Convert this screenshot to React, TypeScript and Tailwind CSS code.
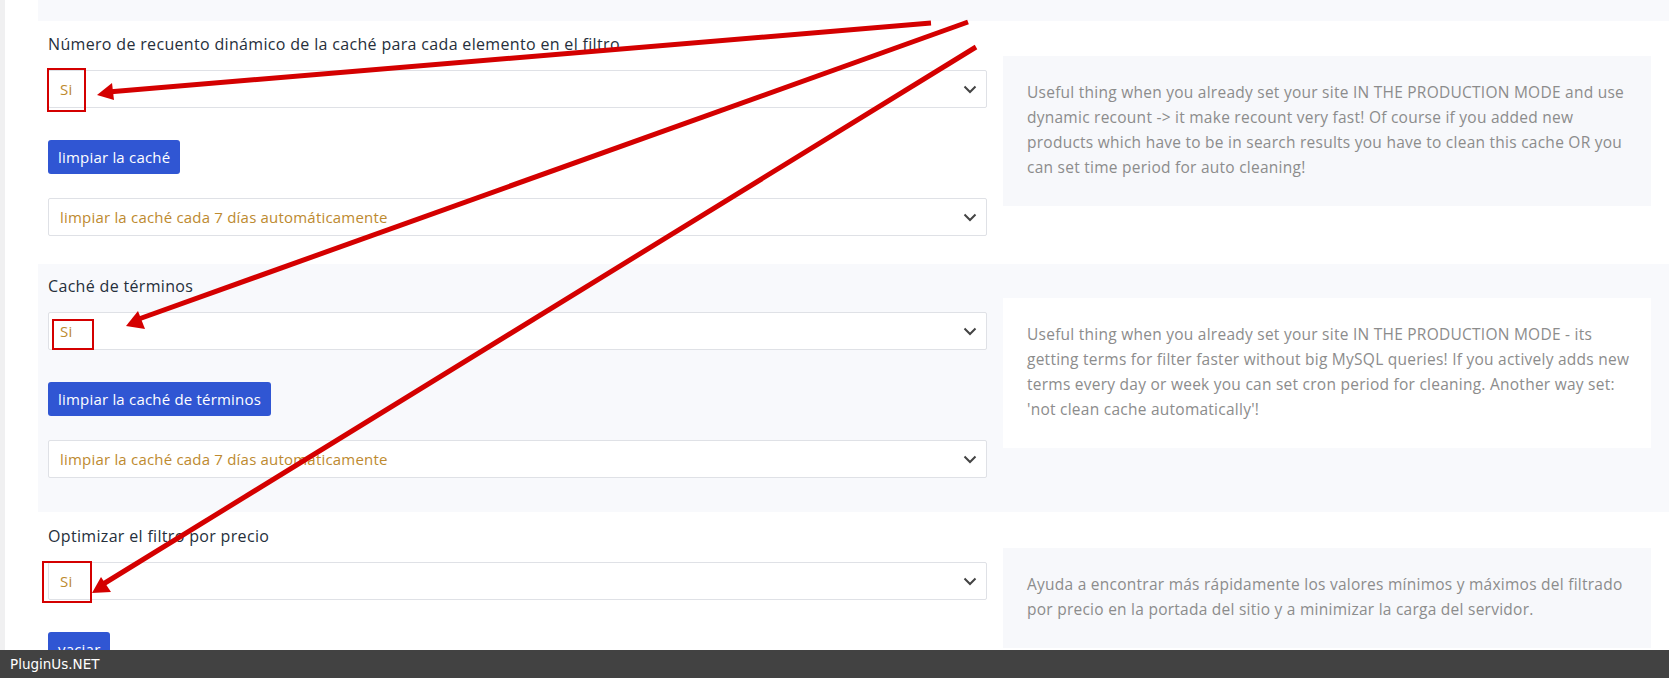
const font = { fontFamily: "'Open Sans', 'Noto Sans', sans-serif" };

const Chevron = () => (
  <svg width="14" height="9" viewBox="0 0 14 9" className="text-[#444]">
    <path d="M1.5 1.5 L7 7 L12.5 1.5" fill="none" stroke="currentColor" strokeWidth="2" />
  </svg>
);

const Select = ({ value }: { value: string }) => (
  <div className="h-[38px] w-full border border-[#dfe1e6] bg-white rounded-[2px] flex items-center justify-between pl-[11px] pr-[9px]">
    <span className="text-[15px] tracking-[0.2px] text-[#bd8a2f]">{value}</span>
    <Chevron />
  </div>
);

const Button = ({ label }: { label: string }) => (
  <button className="h-[34px] px-[10px] bg-[#3056d3] text-white text-[15px] tracking-[0.2px] rounded-[3px] self-start">
    {label}
  </button>
);

type SectionProps = {
  title: string;
  button: string;
  secondSelect?: string;
  info: string[];
  shaded?: boolean;
  className: string;
};

const Section = ({ title, button, secondSelect, info, shaded, className }: SectionProps) => (
  <div className={`flex gap-[16px] px-[10px] ${shaded ? "bg-[#f8f9fc]" : "bg-white"} ${className}`}>
    <div className="w-[939px] flex flex-col">
      <div className="text-[16px] tracking-[0.33px] leading-[24px] text-[#262f3b] mb-[14px]">{title}</div>
      <Select value="Si" />
      <div className="mt-[32px] flex">
        <Button label={button} />
      </div>
      {secondSelect && (
        <div className="mt-[24px]">
          <Select value={secondSelect} />
        </div>
      )}
    </div>
    <div
      className={`w-[648px] self-start mt-[24px] pl-[24px] pr-[20px] pt-[24px] pb-[26px] text-[15.5px] tracking-[0.25px] leading-[25px] text-[#8c8c8c] ${
        shaded ? "bg-white" : "bg-[#f7f8fb]"
      }`}
    >
      {info.map((line, i) => (
        <div key={i} className="whitespace-nowrap">
          {line}
        </div>
      ))}
    </div>
  </div>
);

export default function App() {
  return (
    <div className="relative flex h-[678px] w-[1669px] overflow-hidden bg-white" style={font}>
      <div className="w-[5px] bg-[#f0f0f1] shrink-0" />
      <div className="flex-1 pl-[33px]">
        {/* tail of previous block */}
        <div className="h-[21px] bg-[#f8f9fc]" />

        <Section
          title="Número de recuento dinámico de la caché para cada elemento en el filtro"
          button="limpiar la caché"
          secondSelect="limpiar la caché cada 7 días automáticamente"
          info={[
            "Useful thing when you already set your site IN THE PRODUCTION MODE and use",
            "dynamic recount -> it make recount very fast! Of course if you added new",
            "products which have to be in search results you have to clean this cache OR you",
            "can set time period for auto cleaning!",
          ]}
          className="pt-[11px] pb-[28px]"
        />
        <Section
          shaded
          title="Caché de términos"
          button="limpiar la caché de términos"
          secondSelect="limpiar la caché cada 7 días automáticamente"
          info={[
            "Useful thing when you already set your site IN THE PRODUCTION MODE - its",
            "getting terms for filter faster without big MySQL queries! If you actively adds new",
            "terms every day or week you can set cron period for cleaning. Another way set:",
            "'not clean cache automatically'!",
          ]}
          className="pt-[10px] pb-[34px]"
        />
        <Section
          title="Optimizar el filtro por precio"
          button="vaciar"
          info={[
            "Ayuda a encontrar más rápidamente los valores mínimos y máximos del filtrado",
            "por precio en la portada del sitio y a minimizar la carga del servidor.",
          ]}
          className="pt-[12px] pb-[30px]"
        />
      </div>

      {/* annotations */}
      <svg className="absolute inset-0 pointer-events-none" width="1669" height="678">
        <g fill="none" stroke="#d40000" strokeWidth="2">
          <rect x="48" y="69" width="37" height="42" />
          <rect x="53" y="320" width="40" height="29" />
          <rect x="43" y="562" width="48" height="40" />
        </g>
        <g stroke="#d40000" strokeWidth="5" strokeLinecap="butt">
          <line x1="931" y1="23" x2="108" y2="92" />
          <line x1="968" y1="22" x2="136" y2="320" />
          <line x1="976" y1="47" x2="100" y2="586" />
        </g>
        <g fill="#d40000">
          <polygon points="97,95 112,83 114,100" />
          <polygon points="126,326 138,311 145,329" />
          <polygon points="92,593 101,577 111,592" />
        </g>
      </svg>

      <div className="absolute left-0 right-0 bottom-0 h-[28px] bg-[#424242] flex items-center pl-[10px]">
        <span className="text-white text-[13.5px]" style={{ fontFamily: "'DejaVu Sans', sans-serif" }}>
          PluginUs.NET
        </span>
      </div>
    </div>
  );
}
